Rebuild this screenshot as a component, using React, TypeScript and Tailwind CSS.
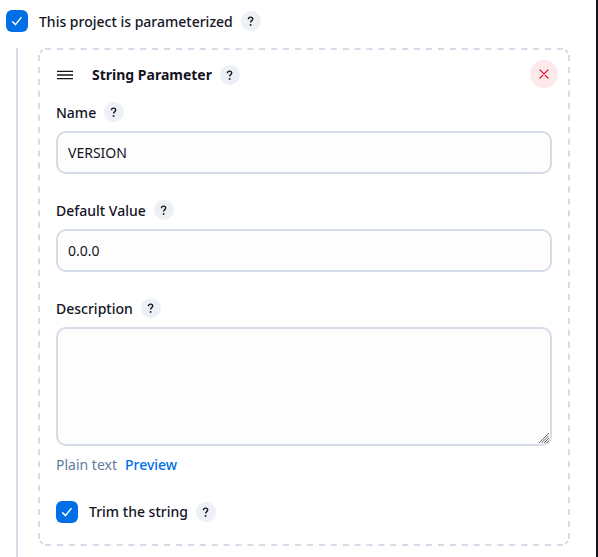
import React from "react";

function Help() {
  return (
    <button
      type="button"
      aria-label="Help"
      className="flex size-5 shrink-0 items-center justify-center rounded-full bg-[#edf0f4] text-[#14141f]"
    >
      <svg width="20" height="20" viewBox="0 0 20 20" fill="none">
        <path
          d="M7.4 8.2C7.5 6.8 8.4 6.1 9.6 6.1c1.2 0 2.1.7 2.1 1.9 0 1.6-2.1 1.6-2.1 3.4"
          stroke="currentColor"
          strokeWidth="1.4"
        />
        <circle cx="9.6" cy="13.9" r="0.95" fill="currentColor" />
      </svg>
    </button>
  );
}

function Check() {
  return (
    <span className="flex size-[22px] shrink-0 items-center justify-center rounded-[6px] bg-[#006fe6]">
      <svg width="22" height="22" viewBox="0 0 22 22" fill="none">
        <path
          d="M6.7 11.8l2.8 2.8 5.6-7"
          stroke="white"
          strokeWidth="1.5"
          strokeLinecap="round"
          strokeLinejoin="round"
        />
      </svg>
    </span>
  );
}

function Label({ text }: { text: string }) {
  return (
    <div className="flex h-5 items-center gap-2">
      <span className="pt-0.5 font-medium">{text}</span>
      <Help />
    </div>
  );
}

function Field({ label, value }: { label: string; value: string }) {
  return (
    <div className="mb-[26px]">
      <Label text={label} />
      <input
        defaultValue={value}
        className="mt-[9px] block h-[43px] w-full rounded-[10px] border-2 border-[#d5dce8] bg-[#fdfdfd] px-2.5 outline-none"
      />
    </div>
  );
}

export default function App() {
  return (
    <div className="flex h-[557px] w-[598px] flex-col overflow-hidden border-r-2 border-[#14141f] bg-white pl-1.5 pt-2.5 font-['Noto_Sans',sans-serif] text-[14px] leading-5 text-[#14141f]">
      <div className="flex h-[22px] items-center">
        <Check />
        <span className="ml-[11px] mr-2 pt-0.5 font-medium">This project is parameterized</span>
        <Help />
      </div>

      <div className="ml-2.5 mt-4 flex-1 border-l-2 border-[#d5dce8] pl-5">
        <div className="relative h-[498px] w-[532px] px-[18px] pt-3">
          <svg
            className="pointer-events-none absolute inset-0"
            width="532"
            height="498"
            fill="none"
            stroke="#d5dce8"
            strokeWidth="2"
          >
            <path d="M7 1H525M7 497H525" strokeDasharray="6 5.907" />
            <path d="M1 7V491M531 7V491" strokeDasharray="6 5.95" />
            <path d="M2.2 5Q3.2 3.2 5 2.2M527 2.2Q528.8 3.2 529.8 5M529.8 493Q528.8 494.8 527 495.8M5 495.8Q3.2 494.8 2.2 493" />
          </svg>

          <div className="flex h-7 items-center">
            <svg width="18" height="18" viewBox="0 0 18 18" className="mt-0.5">
              <path d="M1 5.4h16M1 9h16M1 12.6h16" stroke="#14141f" strokeWidth="1.4" />
            </svg>
            <span className="ml-[18px] mr-2 mt-0.5 font-bold">String Parameter</span>
            <span className="mt-0.5">
              <Help />
            </span>
            <button
              type="button"
              aria-label="Delete"
              className="-mr-1.5 ml-auto flex size-7 items-center justify-center rounded-full bg-[#fce9ec]"
            >
              <svg width="28" height="28" viewBox="0 0 28 28" fill="none">
                <path
                  d="M9.9 9.9l8.2 8.2M18.1 9.9l-8.2 8.2"
                  stroke="#e6001f"
                  strokeWidth="1.2"
                  strokeLinecap="round"
                />
              </svg>
            </button>
          </div>

          <div className="mt-3.5">
            <Field label="Name" value="VERSION" />
            <Field label="Default Value" value="0.0.0" />
            <Label text="Description" />
            <div className="relative mt-[9px]">
              <textarea className="block h-[119px] w-full resize-none rounded-[10px] border-2 border-[#d5dce8] bg-[#fdfdfd] outline-none" />
              <svg
                className="pointer-events-none absolute bottom-[3px] right-[3px]"
                width="10"
                height="10"
                fill="none"
              >
                <path
                  d="M0 10L10 0M2.5 10L10 2.5M5 10L10 5M7.5 10L10 7.5"
                  stroke="#6b6b6b"
                  strokeWidth="1"
                />
              </svg>
            </div>
          </div>

          <div className="mt-[9px] flex h-5 gap-2">
            <span className="text-[#607ca3]">Plain text</span>
            <a className="font-medium text-[#006fe6]">Preview</a>
          </div>

          <div className="mt-[26px] flex h-[22px] items-center">
            <Check />
            <span className="ml-[11px] mr-2 font-medium">Trim the string</span>
            <Help />
          </div>
        </div>
      </div>
    </div>
  );
}
